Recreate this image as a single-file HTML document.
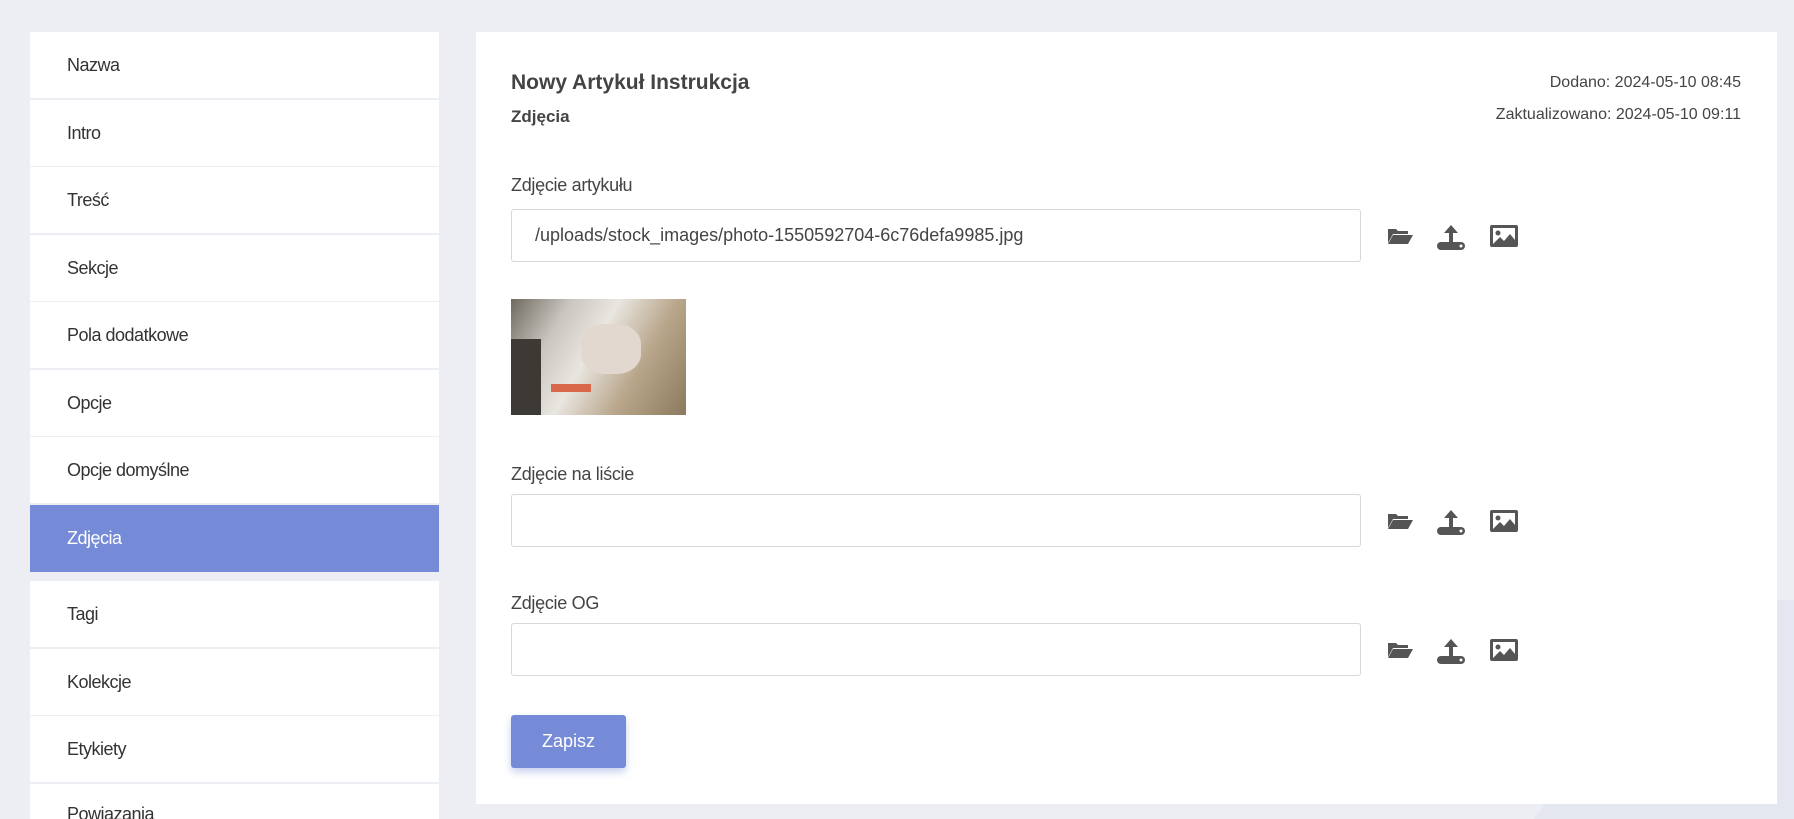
<!DOCTYPE html>
<html style="height:819px;overflow:hidden"><head><meta charset="utf-8"><style>
*{box-sizing:border-box;margin:0;padding:0}
body{width:1794px;height:819px;background:#eceef4;font-family:"Liberation Sans",sans-serif;position:relative;overflow:hidden;color:#333}
.sb{position:absolute;left:30px;top:32px;width:409px;height:787px;overflow:hidden}
.it{position:absolute;left:0;width:409px;height:66px;background:#fff;font-size:18px;letter-spacing:-0.5px;padding-left:37px;line-height:66px;color:#333}
.it.a{background:#768bd7;color:#fff}
.card{position:absolute;left:476px;top:32px;width:1301px;height:772px;background:#fff}
.t{position:absolute;font-weight:bold;color:#444}
.lbl{position:absolute;left:35px;font-size:18px;color:#444;letter-spacing:-0.3px}
.inp{position:absolute;left:35px;width:850px;height:53px;border:1px solid #d6d8dd;border-radius:3px;font-size:18px;padding-left:23px;line-height:51px;color:#444}
.ic{position:absolute}
.btn{position:absolute;left:35px;top:683px;width:115px;height:53px;background:#768bd7;color:#fff;font-size:18px;text-align:center;line-height:53px;border-radius:3px;box-shadow:0 4px 8px rgba(118,139,215,.4)}
.dt{position:absolute;right:36px;font-size:16px;color:#444;text-align:right}
</style></head><body>
<div style="position:absolute;right:0;top:600px;width:260px;height:219px;background:#e4e7f0;clip-path:polygon(60% 0,100% 0,100% 100%,0 100%)"></div>
<div class="sb">
<div class="it" style="top:0">Nazwa</div>
<div class="it" style="top:68px">Intro</div>
<div class="it" style="top:135px">Treść</div>
<div class="it" style="top:203px">Sekcje</div>
<div class="it" style="top:270px">Pola dodatkowe</div>
<div class="it" style="top:338px">Opcje</div>
<div class="it" style="top:405px">Opcje domyślne</div>
<div class="it a" style="top:473px;height:67px">Zdjęcia</div>
<div class="it" style="top:549px">Tagi</div>
<div class="it" style="top:617px">Kolekcje</div>
<div class="it" style="top:684px">Etykiety</div>
<div class="it" style="top:752px;line-height:60px">Powiazania</div>
</div>
<div class="card">
<div class="t" style="left:35px;top:39px;font-size:21px">Nowy Artykuł Instrukcja</div>
<div class="t" style="left:35px;top:75px;font-size:17px">Zdjęcia</div>
<div class="dt" style="top:42px">Dodano: 2024-05-10 08:45</div>
<div class="dt" style="top:74px">Zaktualizowano: 2024-05-10 09:11</div>
<div class="lbl" style="top:143px">Zdjęcie artykułu</div>
<div class="inp" style="top:177px">/uploads/stock_images/photo-1550592704-6c76defa9985.jpg</div>
<div style="position:absolute;left:35px;top:267px;width:175px;height:116px;background:linear-gradient(120deg,#6f6a60 0%,#c9c6c0 25%,#e9e6e0 45%,#b8a58a 70%,#8c7a5e 100%)">
<div style="position:absolute;left:0;top:40px;width:30px;height:76px;background:#3d3a36"></div>
<div style="position:absolute;left:70px;top:25px;width:60px;height:50px;background:#e2d8cf;border-radius:40%"></div>
<div style="position:absolute;left:40px;top:85px;width:40px;height:8px;background:#d9684a"></div>
</div>
<div class="lbl" style="top:432px">Zdjęcie na liście</div>
<div class="inp" style="top:462px"></div>
<div class="lbl" style="top:561px">Zdjęcie OG</div>
<div class="inp" style="top:591px"></div>
<div class="btn">Zapisz</div>
</div>
<svg width="0" height="0" style="position:absolute"><defs>
<g id="ics" fill="#555">
<path d="M1 4h8l2 2h10v3H6L1 18z M6 10h20l-5 9H1z"/>
<g transform="translate(50,0)"><path d="M14 0l7 8h-5v10h-4V8H7z"/><rect x="0" y="17" width="28" height="8" rx="4"/><circle cx="24" cy="21" r="1.5" fill="#fff"/></g>
<g transform="translate(103,0)"><rect x="0" y="0" width="28" height="22" rx="2"/><rect x="3" y="3" width="22" height="16" fill="#fff"/><circle cx="8" cy="8" r="2.5"/><path d="M3 19l7-7 4 4 6-7 5 6v4z"/></g>
</g></defs></svg>
<svg class="ic" style="left:1387px;top:225px" width="140" height="26"><use href="#ics"/></svg>
<svg class="ic" style="left:1387px;top:510px" width="140" height="26"><use href="#ics"/></svg>
<svg class="ic" style="left:1387px;top:639px" width="140" height="26"><use href="#ics"/></svg>
</body></html>
